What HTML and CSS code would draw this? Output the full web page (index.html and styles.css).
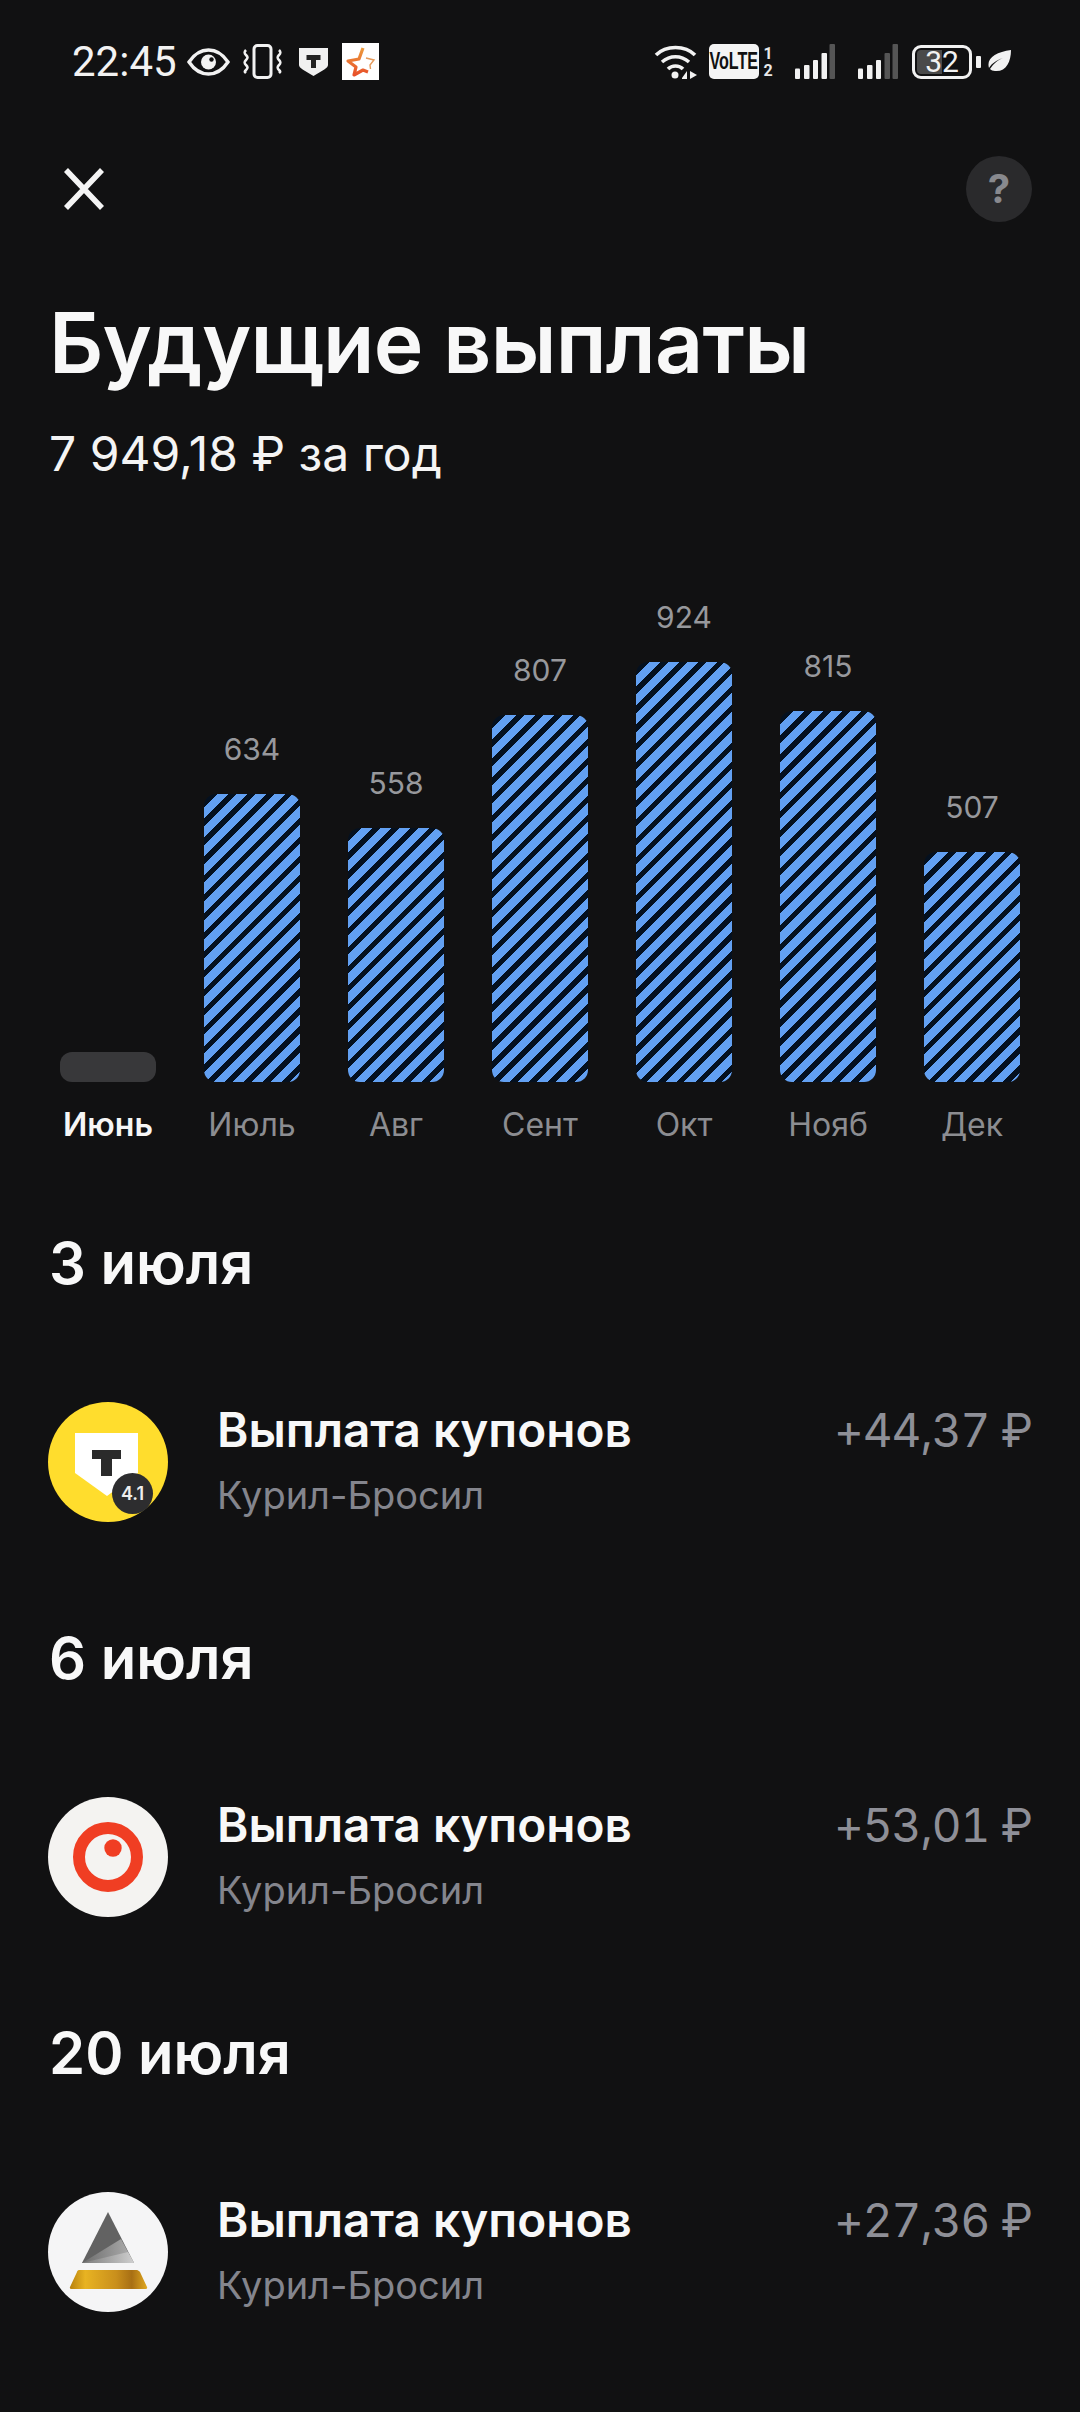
FILE: index.html
```html
<!DOCTYPE html>
<html lang="ru">
<head>
<meta charset="utf-8">
<title>Будущие выплаты</title>
<link rel="stylesheet" href="styles.css">
</head>
<body>
<div class="status">
  <span class="time">22:45</span>
  <svg class="s-eye" viewBox="0 0 43 28"><path d="M2 14C8 5 15 2 21.500 2S35 5 41 14C35 23 28 26 21.500 26S8 23 2 14Z" fill="none" stroke="#f2f2f2" stroke-width="3.400"/><circle cx="21.500" cy="14" r="7.500" fill="#f2f2f2"/><circle cx="24.500" cy="11.500" r="2.200" fill="#111"/></svg>
  <svg class="s-vib" viewBox="0 0 39 35"><rect x="11" y="1.500" width="17" height="32" rx="3.500" fill="none" stroke="#f2f2f2" stroke-width="3"/><path d="M3 6C1 8 1 9 3 11S5 14 3 16 1 19 3 21 5 24 3 26 2 28 3 29M36 6C38 8 38 9 36 11S34 14 36 16 38 19 36 21 34 24 36 26 37 28 36 29" fill="none" stroke="#f2f2f2" stroke-width="2.600"/></svg>
  <svg class="s-shield" viewBox="0 0 29 28"><path d="M0 0H29V17C29 20 24 22 14.500 28 5 22 0 20 0 17Z" fill="#f0f0f0"/><path d="M7.500 7H21.500V12H17V20H12V12H7.500Z" fill="#222"/></svg>
  <svg class="s-star" viewBox="0 0 37 37"><defs><linearGradient id="starg" x1="0" y1="0" x2="0" y2="1"><stop offset="0" stop-color="#ec9a3c"/><stop offset="1" stop-color="#e8502a"/></linearGradient></defs><rect width="37" height="37" fill="#fff"/><path d="M21 5L17 16 6 18 14 24 12 32 21 27 26 29" fill="none" stroke="url(#starg)" stroke-width="3.200" stroke-linejoin="round"/><path d="M24 15L32 17 28 22 28.500 26" fill="none" stroke="#e59a5a" stroke-width="1.400"/></svg>
  <span class="status-spacer"></span>
  <svg class="s-wifi" viewBox="0 0 43 35"><path d="M2 11C12 1 31 1 41 11M8 18C16 11 27 11 35 18M14 25C18 21 25 21 29 25" fill="none" stroke="#f2f2f2" stroke-width="3.600"/><circle cx="21" cy="31" r="3.500" fill="#f2f2f2"/><path d="M28 34L33 27V35H28ZM36 27L43 31 36 35Z" fill="#f2f2f2"/></svg>
  <span class="volte"><span class="volte-text">VoLTE</span></span>
  <span class="sims"><span>1</span><span>2</span></span>
  <svg class="s-sig" viewBox="0 0 40 35"><rect y="24.500" width="5" height="10.500" rx="1" fill="#f2f2f2"/><rect x="9" y="21" width="5.500" height="14" rx="1" fill="#f2f2f2"/><rect x="18" y="16" width="5" height="19" rx="1" fill="#f2f2f2"/><rect x="26.500" y="9" width="5.500" height="26" rx="1" fill="#f2f2f2"/><rect x="34.500" width="5.500" height="35" rx="1" fill="#555"/></svg>
  <svg class="s-sig" viewBox="0 0 40 35"><rect y="24.500" width="5" height="10.500" rx="1" fill="#f2f2f2"/><rect x="9" y="21" width="5.500" height="14" rx="1" fill="#f2f2f2"/><rect x="18" y="16" width="5" height="19" rx="1" fill="#f2f2f2"/><rect x="26.500" y="9" width="5.500" height="26" rx="1" fill="#555"/><rect x="34.500" width="5.500" height="35" rx="1" fill="#555"/></svg>
  <span class="battery"><span class="battery-fill"></span><span class="battery-num">32</span></span>
  <span class="battery-nub"></span>
  <svg class="s-leaf" viewBox="0 0 23 23"><path d="M23 0C23 12 18 22 7 21 5 21 3 20 2 19 6 13 10 10 15 8 9 10 4 13 1 18-2 8 8 2 23 0Z" fill="#f2f2f2"/></svg>
</div>

<div class="topbar">
  <svg class="close" viewBox="0 0 40 42"><path d="M2 2L38 40M38 2L2 40" stroke="#f4f4f4" stroke-width="5.500" fill="none"/></svg>
  <span class="help">?</span>
</div>

<h1 class="title">Будущие выплаты</h1>
<p class="total">7 949,18 ₽ за год</p>

<div class="chart">
  <div class="col"><div class="bar bar-empty"></div><div class="month month-active">Июнь</div></div>
  <div class="col"><div class="val">634</div><div class="bar h-634"></div><div class="month">Июль</div></div>
  <div class="col"><div class="val">558</div><div class="bar h-558"></div><div class="month">Авг</div></div>
  <div class="col"><div class="val">807</div><div class="bar h-807"></div><div class="month">Сент</div></div>
  <div class="col"><div class="val">924</div><div class="bar h-924"></div><div class="month">Окт</div></div>
  <div class="col"><div class="val">815</div><div class="bar h-815"></div><div class="month">Нояб</div></div>
  <div class="col"><div class="val">507</div><div class="bar h-507"></div><div class="month">Дек</div></div>
</div>

<section class="group group-first">
  <h2 class="date">3 июля</h2>
  <div class="row">
    <div class="logo">
      <svg class="logo-svg" viewBox="0 0 120 120"><circle cx="60" cy="60" r="60" fill="#ffdd2d"/><path d="M27 31H90V71L59 94 27 71Z" fill="#fff"/><path d="M44 48H73V57H64V74H53V57H44Z" fill="#2b2b2b"/></svg>
      <span class="badge">4.1</span>
    </div>
    <div class="row-text"><div class="row-title">Выплата купонов</div><div class="row-sub">Курил-Бросил</div></div>
    <div class="amount">+44,37 ₽</div>
  </div>
</section>

<section class="group">
  <h2 class="date">6 июля</h2>
  <div class="row">
    <div class="logo">
      <svg class="logo-svg" viewBox="0 0 120 120"><circle cx="60" cy="60" r="60" fill="#f4f3f1"/><circle cx="60" cy="60" r="29" fill="none" stroke="#f03e23" stroke-width="12"/><circle cx="65" cy="51" r="8.700" fill="#f03e23"/></svg>
    </div>
    <div class="row-text"><div class="row-title">Выплата купонов</div><div class="row-sub">Курил-Бросил</div></div>
    <div class="amount">+53,01 ₽</div>
  </div>
</section>

<section class="group">
  <h2 class="date">20 июля</h2>
  <div class="row">
    <div class="logo">
      <svg class="logo-svg" viewBox="0 0 120 120">
        <defs>
          <linearGradient id="gold" x1="0" y1="0" x2="1" y2="0"><stop offset="0" stop-color="#b8820f"/><stop offset=".2" stop-color="#e8b322"/><stop offset=".6" stop-color="#c98f1c"/><stop offset=".8" stop-color="#a86f14"/><stop offset="1" stop-color="#e0a820"/></linearGradient>
          <linearGradient id="fan" x1="0" y1="0" x2="1" y2="0"><stop offset="0" stop-color="#6c6c6c"/><stop offset="1" stop-color="#b0b0b0"/></linearGradient>
          <linearGradient id="fan2" x1="0" y1="0" x2="1" y2="0"><stop offset="0" stop-color="#7a7a7a"/><stop offset="1" stop-color="#cfcfcf"/></linearGradient>
        </defs>
        <circle cx="60" cy="60" r="60" fill="#f5f5f6"/>
        <path d="M60 20L86 71H34Z" fill="#626262"/>
        <path d="M34 71L73 47L86 71Z" fill="url(#fan)"/>
        <path d="M34 71L80 60L86 71Z" fill="url(#fan2)"/>
        <path d="M31 78H89C90 78 91 79 92 80L99 95C99.500 96 99 97 97 97H24C22 97 21.500 96 22 95L29 80C29 79 30 78 31 78Z" fill="url(#gold)"/>
      </svg>
    </div>
    <div class="row-text"><div class="row-title">Выплата купонов</div><div class="row-sub">Курил-Бросил</div></div>
    <div class="amount">+27,36 ₽</div>
  </div>
</section>
</body>
</html>
```
FILE: styles.css
```css
* { box-sizing: border-box; }
html, body { margin: 0; padding: 0; }
body {
  width: 1080px;
  height: 2412px;
  overflow: hidden;
  background: #111112;
  color: #f6f6f6;
  font-family: Inter, "Noto Sans", sans-serif;
}
svg { display: block; flex: none; }

.status { display: flex; align-items: center; height: 37px; margin-top: 43px; padding-left: 72px; }
.time { font: 400 42px/37px Roboto, sans-serif; color: #f2f2f2; width: 103px; white-space: nowrap; }
.s-eye { width: 43px; height: 28px; margin-left: 12px; }
.s-vib { width: 39px; height: 35px; margin-left: 13px; }
.s-shield { width: 29px; height: 28px; margin-left: 17px; }
.s-star { width: 37px; height: 37px; margin-left: 14px; }
.status-spacer { flex: 1; }
.s-wifi { width: 43px; height: 35px; }
.volte { display: flex; justify-content: center; width: 50px; height: 35px; margin-left: 12px; background: #f4f4f4; border-radius: 5px; color: #111; font: 700 23px/35px "Liberation Sans", sans-serif; }
.volte-text { display: block; transform: scaleX(.7); }
.sims { display: flex; flex-direction: column; width: 8px; margin-left: 5px; font: 700 16px/17px Roboto, sans-serif; color: #e8e8e8; align-items: center; }
.s-sig { width: 40px; height: 35px; margin-left: 23px; }
.battery { position: relative; width: 60px; height: 34px; margin-left: 14px; border: 3px solid #f2f2f2; border-radius: 9px; overflow: hidden; }
.battery-fill { position: absolute; left: 2px; top: 2px; bottom: 2px; width: 25px; background: #4a4a4a; border-radius: 4px 0 0 4px; }
.battery-num { position: absolute; inset: 0; text-align: center; font: 400 30px/28px Roboto, sans-serif; color: #f2f2f2; }
.battery-nub { width: 5px; height: 12px; margin-left: 4px; background: #f2f2f2; border-radius: 1px; }
.s-leaf { width: 23px; height: 23px; margin-left: 7px; margin-right: 69px; }

.topbar { display: flex; justify-content: space-between; align-items: center; height: 66px; margin-top: 76px; padding: 0 48px 0 64px; }
.close { width: 40px; height: 42px; }
.help { width: 66px; height: 66px; border-radius: 50%; background: #2a2a2c; color: #88898e; font: 700 40px/66px Inter, sans-serif; text-align: center; }

.title { margin: 74px 0 0 49px; font-size: 84px; line-height: 94px; font-weight: 600; letter-spacing: -.7px; color: #f8f8f8; }
.total { margin: 36px 0 0 49px; font-size: 48px; line-height: 56px; font-weight: 400; color: #f4f4f4; }

.chart { display: grid; grid-template-columns: repeat(7, 96px); column-gap: 48px; align-items: end; height: 663px; padding: 0 60px; }
.col { display: flex; flex-direction: column; align-items: center; }
.val { font-size: 30px; line-height: 40px; color: #97989c; margin-bottom: 25px; }
.bar { width: 96px; border-radius: 12px; background: repeating-linear-gradient(135deg, #62a0f2 0 4px, #04101f 4px 9.300px, #62a0f2 9.300px 13.400px); }
.bar-empty { height: 30px; background: #38383a; }
.h-634 { height: 288px; }
.h-558 { height: 254px; }
.h-807 { height: 367px; }
.h-924 { height: 420px; }
.h-815 { height: 371px; }
.h-507 { height: 230px; }
.month { width: 144px; margin-top: 23px; text-align: center; font-size: 32px; line-height: 40px; color: #8c8d91; }
.month-active { color: #f6f6f6; font-weight: 600; }

.group { height: 395px; }
.group-first { margin-top: 84px; }
.date { margin: 0 0 0 49px; font-size: 58px; line-height: 68px; font-weight: 600; color: #f8f8f8; }
.row { display: flex; align-items: flex-start; margin-top: 105px; padding: 0 48px; }
.logo { position: relative; width: 120px; height: 120px; flex: none; }
.logo-svg { width: 120px; height: 120px; }
.badge { position: absolute; left: 64px; top: 71px; width: 41px; height: 41px; border-radius: 50%; background: #2d2d2f; color: #eee; font-size: 18px; font-weight: 600; line-height: 41px; text-align: center; }
.row-text { flex: 1; margin-left: 49px; }
.row-title { font-size: 47.700px; line-height: 56px; font-weight: 600; color: #f8f8f8; }
.row-sub { font-size: 38px; line-height: 46px; color: #84858d; margin-top: 14px; }
.amount { font-size: 46px; line-height: 56px; color: #8e8f97; font-variant-numeric: tabular-nums; letter-spacing: -1px; }
```
